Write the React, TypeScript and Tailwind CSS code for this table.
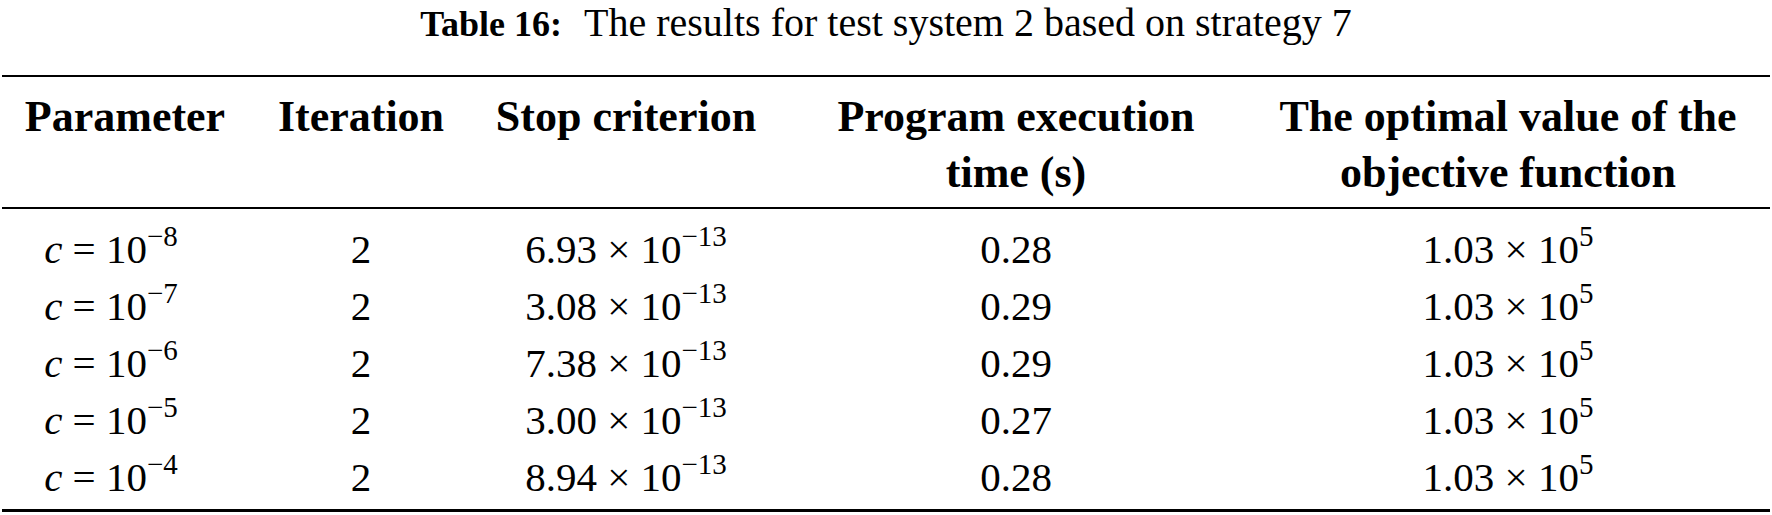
import React from "react";

const rows = [
  { p: "8", s: "6.93", t: "0.28" },
  { p: "7", s: "3.08", t: "0.29" },
  { p: "6", s: "7.38", t: "0.29" },
  { p: "5", s: "3.00", t: "0.27" },
  { p: "4", s: "8.94", t: "0.28" },
];

const Sup = ({ children }: { children: React.ReactNode }) => (
  <span className="relative top-[-17px] text-[29px] leading-none">{children}</span>
);

export default function App() {
  return (
    <div
      className="w-[1772px] h-[515px] bg-white text-black overflow-hidden"
      style={{ fontFamily: '"Liberation Serif", "Times New Roman", serif' }}
    >
      <div className="h-[75px] flex items-start justify-center">
        <div className="leading-[45px] whitespace-nowrap">
          <span className="font-bold text-[36px]">Table 16:</span>
          <span className="ml-[22px] text-[40px]">The results for test system 2 based on strategy 7</span>
        </div>
      </div>
      <div className="mx-[2px] border-t-[2px] border-black" />
      <div className="grid grid-cols-[250px_222px_308px_472px_512px] font-bold text-[44px] leading-[56px] text-center pt-[12px] pb-[6px]">
        <div>Parameter</div>
        <div>Iteration</div>
        <div>Stop criterion</div>
        <div>
          Program execution
          <br />
          time (s)
        </div>
        <div>
          The optimal value of the
          <br />
          objective function
        </div>
      </div>
      <div className="mx-[2px] border-t-[2px] border-black" />
      <div className="pt-[12px] pb-[3px] text-[41px] leading-[57px]">
        {rows.map((r, i) => (
          <div key={i} className="grid grid-cols-[250px_222px_308px_472px_512px] text-center">
            <div className="pr-[28px]">
              <span className="italic">c</span> = 10<Sup>−{r.p}</Sup>
            </div>
            <div>2</div>
            <div>
              {r.s} × 10<Sup>−13</Sup>
            </div>
            <div>{r.t}</div>
            <div>
              1.03 × 10<Sup>5</Sup>
            </div>
          </div>
        ))}
      </div>
      <div className="mx-[2px] border-t-[3px] border-black" />
    </div>
  );
}
